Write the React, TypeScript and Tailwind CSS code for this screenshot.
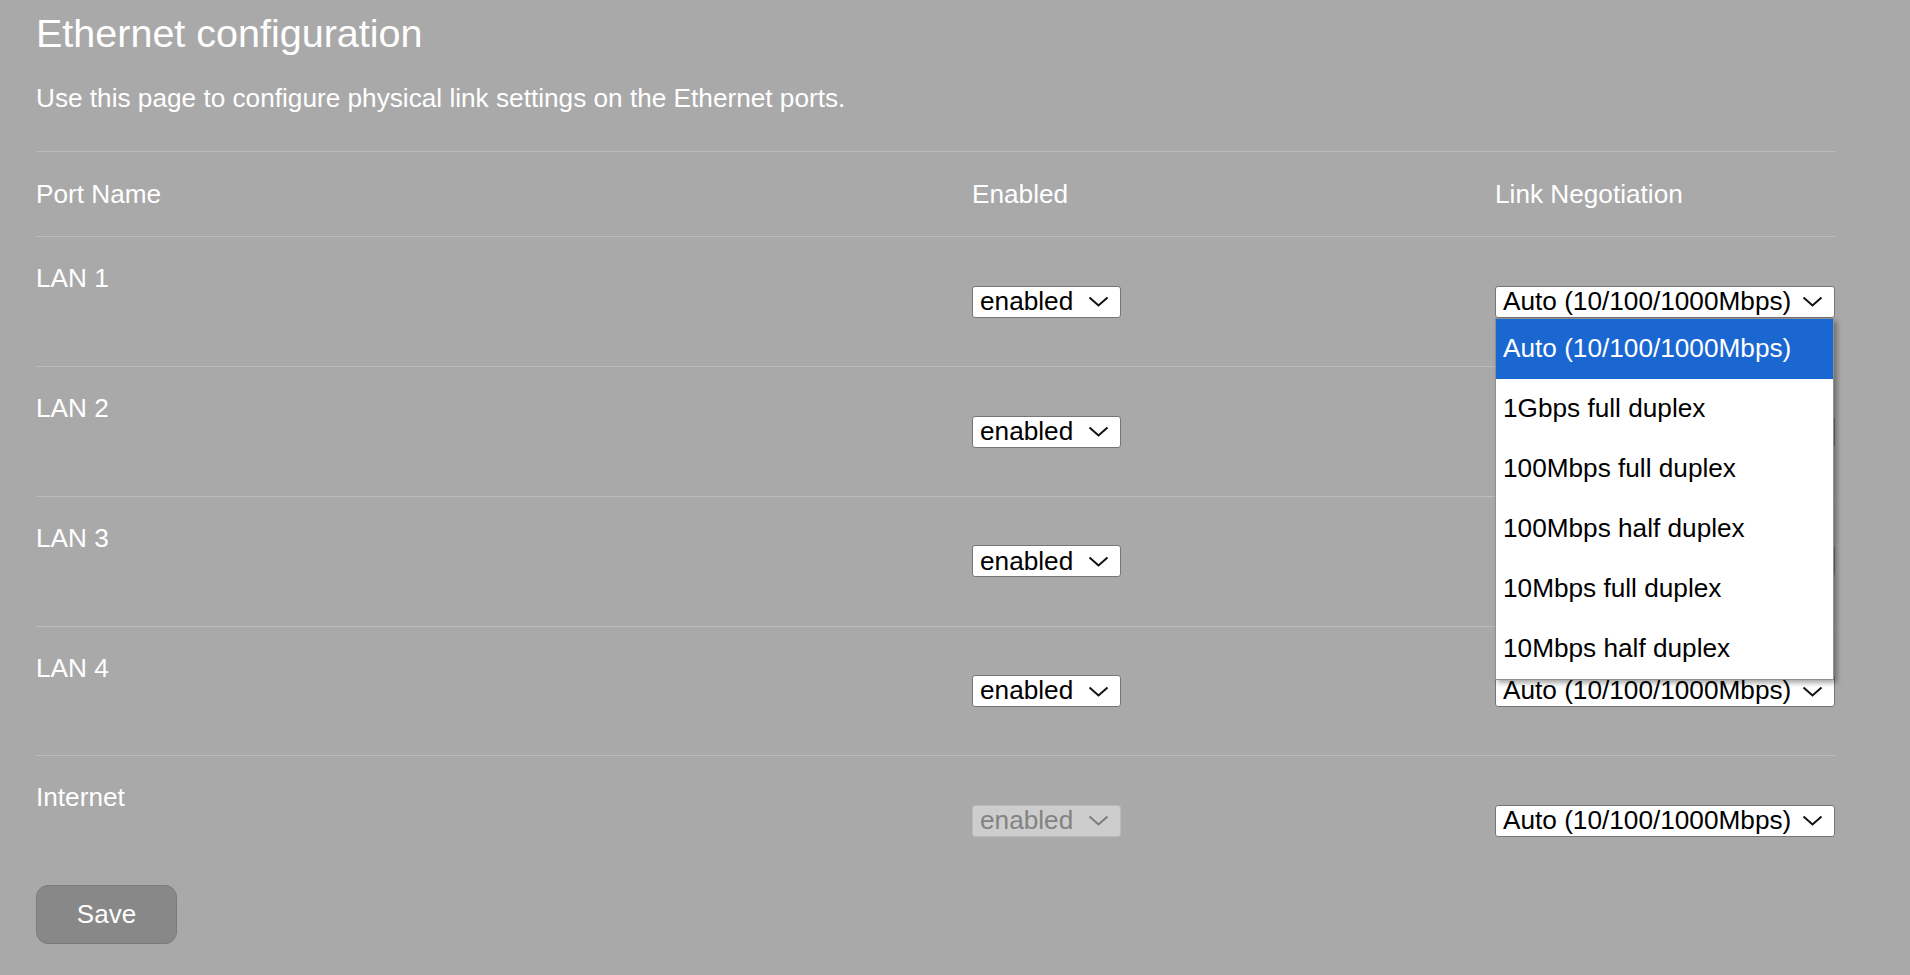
import React from "react";

const Chevron = ({ color = "#111111" }: { color?: string }) => (
  <svg width="21" height="11" viewBox="0 0 21 11" className="shrink-0">
    <polyline points="1.5,1.5 10.5,9.5 19.5,1.5" fill="none" stroke={color} strokeWidth="2" strokeLinejoin="miter" />
  </svg>
);

function Select({ value, width, disabled = false }: { value: string; width: string; disabled?: boolean }) {
  return (
    <div
      className={`${width} h-[32px] flex items-center justify-between pl-[7px] pr-[11px] rounded-[3px] border ${
        disabled ? "bg-[#cdcdcd] border-[#b9b9b9] text-[#838383]" : "bg-white border-[#767676] text-black"
      } text-[26.2px] leading-[29.4px] whitespace-nowrap`}
    >
      <span>{value}</span>
      <Chevron color={disabled ? "#7c7c7c" : "#111111"} />
    </div>
  );
}

const options = [
  "Auto (10/100/1000Mbps)",
  "1Gbps full duplex",
  "100Mbps full duplex",
  "100Mbps half duplex",
  "10Mbps full duplex",
  "10Mbps half duplex",
];

const rows = [
  { name: "LAN 1", open: true },
  { name: "LAN 2" },
  { name: "LAN 3" },
  { name: "LAN 4" },
  { name: "Internet", disabled: true },
];

export default function App() {
  return (
    <div
      className="min-h-screen w-full bg-[#a9a9a9] text-white pl-[36px] pt-[11px]"
      style={{ fontFamily: '"Liberation Sans", Arial, sans-serif' }}
    >
      <h1 className="text-[39.5px] leading-[45px] font-normal">Ethernet configuration</h1>
      <p className="mt-[27.5px] text-[26.2px] leading-[29.4px]">
        Use this page to configure physical link settings on the Ethernet ports.
      </p>
      <div className="mt-[38.5px] w-[1799px] text-[26.2px] leading-[29.4px]">
        <div className="h-[85px] border-t border-[#bcbcbc] flex items-center">
          <div className="w-[936px]">Port Name</div>
          <div className="w-[523px]">Enabled</div>
          <div className="flex-1">Link Negotiation</div>
        </div>
        {rows.map((r) => (
          <div key={r.name} className="h-[129.75px] border-t border-[#bcbcbc] flex">
            <div className="w-[936px] pt-[27px]">{r.name}</div>
            <div className="w-[523px] flex items-center">
              <Select value="enabled" width="w-[149px]" disabled={r.disabled} />
            </div>
            <div className="flex-1 flex items-center">
              <div className="relative">
                <Select value="Auto (10/100/1000Mbps)" width="w-[340px]" />
                {r.open && (
                  <div className="absolute left-0 top-full z-10 w-[339px] bg-white border border-[#8f8f8f] shadow-[3px_3px_5px_rgba(0,0,0,0.35)] text-black text-[26.2px]">
                    {options.map((o, i) => (
                      <div
                        key={o}
                        className={`h-[60px] flex items-center pl-[7px] whitespace-nowrap ${
                          i === 0 ? "bg-[#1a67d2] text-white" : ""
                        }`}
                      >
                        {o}
                      </div>
                    ))}
                  </div>
                )}
              </div>
            </div>
          </div>
        ))}
      </div>
      <button className="w-[141px] h-[59px] rounded-[12px] bg-[#888888] border border-[#7b7b7b] text-white text-[26px] leading-[29.4px] flex items-center justify-center">
        Save
      </button>
    </div>
  );
}
